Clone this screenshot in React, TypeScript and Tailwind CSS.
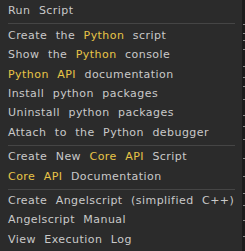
import React from 'react';

type Part = { t: string; hi?: boolean };

const Y = '#e8c547';

function Item({ parts }: { parts: Part[] }) {
  return (
    <div className="h-[19.4px] flex items-center px-[8px] whitespace-pre">
      <span>
        {parts.map((p, i) => (
          <span key={i} style={p.hi ? { color: Y } : undefined}>
            {p.t}
          </span>
        ))}
      </span>
    </div>
  );
}

function Sep() {
  return <div className="mx-[8px] my-[2px] w-[227px] h-px bg-[#454545]" />;
}

const ticks = [24, 33, 40, 49, 66, 77, 86, 99, 115, 126, 139, 158, 176, 193, 205, 220, 236];

export default function App() {
  return (
    <div className="w-[245px] h-[251px] flex bg-[#1c1c1c] overflow-hidden">
      <div
        className="w-[242px] h-full bg-[#2b2b2b] text-[#c9c9c9] text-[11px] tracking-[0.45px] pt-[2px]"
        style={{ fontFamily: '"DejaVu Sans", sans-serif', wordSpacing: '4.5px' }}
      >
        <Item parts={[{ t: 'Run Script' }]} />
        <Sep />
        <Item parts={[{ t: 'Create the ' }, { t: 'Python', hi: true }, { t: ' script' }]} />
        <Item parts={[{ t: 'Show the ' }, { t: 'Python', hi: true }, { t: ' console' }]} />
        <Item parts={[{ t: 'Python API', hi: true }, { t: ' documentation' }]} />
        <Item parts={[{ t: 'Install python packages' }]} />
        <Item parts={[{ t: 'Uninstall python packages' }]} />
        <Item parts={[{ t: 'Attach to the Python debugger' }]} />
        <Sep />
        <Item parts={[{ t: 'Create New ' }, { t: 'Core API', hi: true }, { t: ' Script' }]} />
        <Item parts={[{ t: 'Core API', hi: true }, { t: ' Documentation' }]} />
        <Sep />
        <Item parts={[{ t: 'Create Angelscript (simplified C++)' }]} />
        <Item parts={[{ t: 'Angelscript Manual' }]} />
        <Item parts={[{ t: 'View Execution Log' }]} />
      </div>
      <div className="relative flex-1 h-full">
        {ticks.map((y) => (
          <div key={y} className="absolute right-0 w-[2px] h-px bg-[#8a8a8a]" style={{ top: y }} />
        ))}
      </div>
    </div>
  );
}
